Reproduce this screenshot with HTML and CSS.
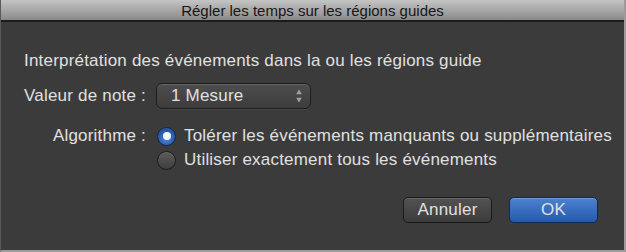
FILE: index.html
```html
<!DOCTYPE html>
<html lang="fr">
<head>
<meta charset="utf-8">
<link rel="stylesheet" href="styles.css">
</head>
<body>
<div class="window">
  <div class="titlebar">Régler les temps sur les régions guides</div>
  <div class="content">
    <div class="intro">Interprétation des événements dans la ou les régions guide</div>
    <div class="row note-row">
      <span class="label">Valeur de note :</span>
      <div class="popup">
        <span>1 Mesure</span>
        <svg class="arrows" width="6" height="14" viewBox="0 0 6 14"><path d="M3 0.5 L5.8 5.2 H0.2 Z M3 13.5 L5.8 8.8 H0.2 Z" fill="#a0a0a0"/></svg>
      </div>
    </div>
    <div class="algo">
      <span class="algo-label">Algorithme :</span>
      <div class="options">
        <div class="option"><span class="radio on"><span class="dot"></span></span><span>Tolérer les événements manquants ou supplémentaires</span></div>
        <div class="option"><span class="radio"></span><span>Utiliser exactement tous les événements</span></div>
      </div>
    </div>
    <div class="buttons">
      <button class="btn">Annuler</button>
      <button class="btn primary">OK</button>
    </div>
  </div>
</div>
</body>
</html>
```
FILE: styles.css
```css
html, body { margin: 0; padding: 0; background: #3b3b3b; }
body { width: 626px; height: 252px; overflow: hidden; font-family: "Liberation Sans", Arial, sans-serif; }
.window {
  width: 626px; height: 252px; box-sizing: border-box;
  border-left: 1px solid #5a5a5a; border-right: 2px solid #9c9c9c; border-bottom: 2px solid #9c9c9c;
  background: #3b3b3b; display: flex; flex-direction: column;
}
.titlebar {
  height: 20px; line-height: 21px; text-align: center; font-size: 15px; color: #161616;
  background: linear-gradient(#c4c4c4, #8a8a8a);
  border-bottom: 2px solid #1c1c1c;
}
.content { padding: 28px 0 0 23px; color: #e0e0e0; font-size: 17px; letter-spacing: 0.2px; flex: 1; display: flex; flex-direction: column; }
.intro { height: 22px; line-height: 22px; }
.row { display: flex; align-items: center; }
.note-row { margin-top: 11px; }
.label { width: 132px; }
.popup {
  width: 155px; height: 26px; box-sizing: border-box; border-radius: 6px;
  border: 1px solid #1c1c1c; background: linear-gradient(#4e4e4e, #3c3c3c);
  box-shadow: inset 0 1px 0 rgba(255,255,255,0.13), 0 1px 0 rgba(255,255,255,0.06);
  display: flex; align-items: center; justify-content: space-between; padding: 0 8px 0 14px;
}
.arrows { display: block; }
.algo { display: flex; margin-top: 15px; }
.algo-label { width: 122px; text-align: right; padding-right: 11px; height: 24px; line-height: 24px; }
.options { display: flex; flex-direction: column; }
.option { display: flex; align-items: center; height: 24px; gap: 8px; }
.radio {
  width: 19px; height: 19px; box-sizing: border-box; border-radius: 50%;
  border: 1px solid #1a1a1a; background: linear-gradient(#5c5c5c, #3e3e3e);
  box-shadow: inset 0 1px 0 rgba(255,255,255,0.1);
  display: flex; align-items: center; justify-content: center;
}
.radio.on { background: radial-gradient(circle at 50% 65%, #4f86d6, #1e4f9c 75%); border-color: #10274d; }
.dot { width: 8px; height: 8px; border-radius: 50%; background: #f4f7ff; }
.buttons { display: flex; justify-content: flex-end; gap: 17px; margin-top: 25px; padding-right: 26px; }
.btn {
  width: 89px; height: 26px; border-radius: 5px; font-family: inherit; font-size: 17px; letter-spacing: 0.2px; color: #e0e0e0;
  border: 1px solid #1a1a1a; background: linear-gradient(#525252, #3c3c3c);
  box-shadow: inset 0 1px 0 rgba(255,255,255,0.13);
  padding: 0;
}
.btn.primary { background: linear-gradient(#4c82d0, #2459ac); border-color: #112a55; box-shadow: inset 0 1px 0 rgba(255,255,255,0.2); }
```
